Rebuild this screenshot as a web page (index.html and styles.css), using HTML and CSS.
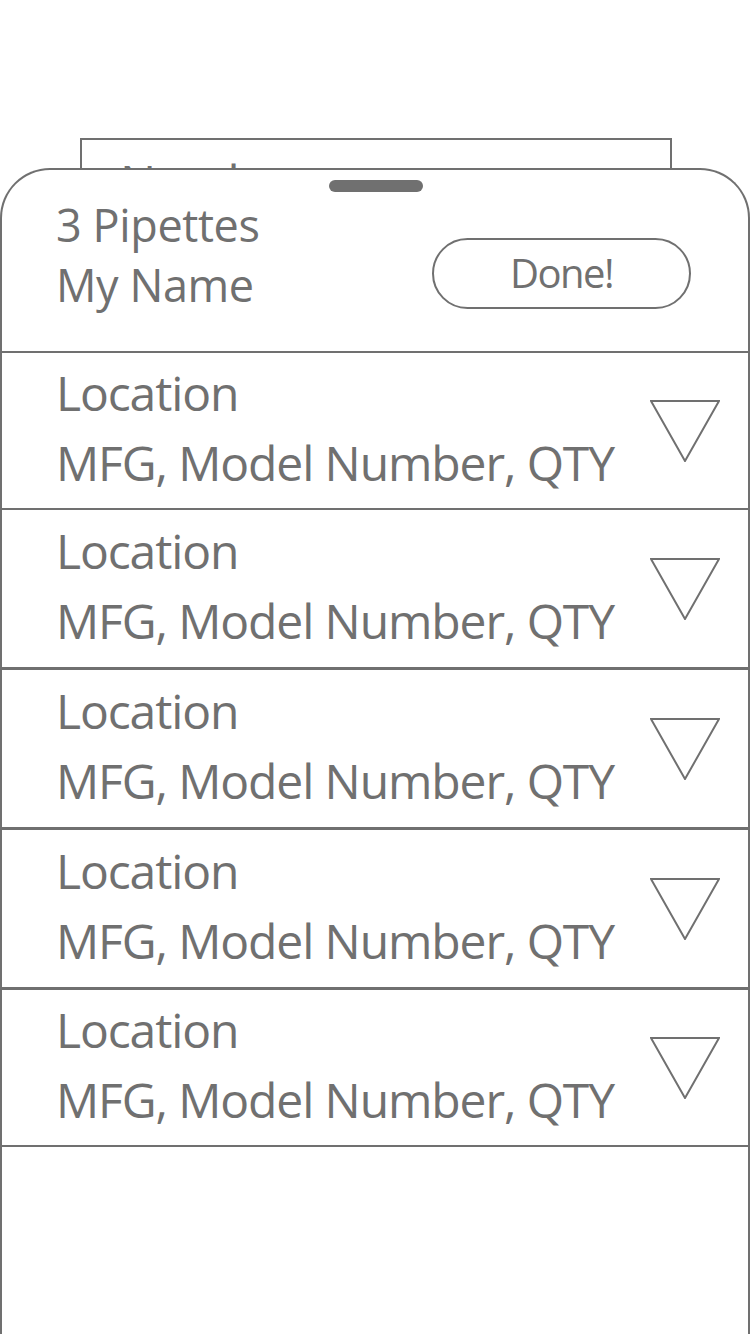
FILE: index.html
```html
<!DOCTYPE html>
<html>
<head>
<meta charset="utf-8">
<link rel="stylesheet" href="styles.css">
</head>
<body>
<div class="page">
  <div class="behind-field"><span class="behind-text">Number</span></div>
  <div class="sheet">
    <div class="handle"></div>
    <div class="sheet-header">
      <div class="header-text">
        <div class="title">3 Pipettes</div>
        <div class="title">My Name</div>
      </div>
      <button class="done-btn">Done!</button>
    </div>
    <div class="row">
      <div class="row-text"><div class="line">Location</div><div class="line">MFG, Model Number, QTY</div></div>
      <svg class="tri" width="70" height="62" viewBox="0 0 70 62"><polygon points="1,1 69,1 35,61" fill="none" stroke="#707070" stroke-width="2"/></svg>
    </div>
    <div class="row thick">
      <div class="row-text"><div class="line">Location</div><div class="line">MFG, Model Number, QTY</div></div>
      <svg class="tri" width="70" height="62" viewBox="0 0 70 62"><polygon points="1,1 69,1 35,61" fill="none" stroke="#707070" stroke-width="2"/></svg>
    </div>
    <div class="row thick">
      <div class="row-text"><div class="line">Location</div><div class="line">MFG, Model Number, QTY</div></div>
      <svg class="tri" width="70" height="62" viewBox="0 0 70 62"><polygon points="1,1 69,1 35,61" fill="none" stroke="#707070" stroke-width="2"/></svg>
    </div>
    <div class="row thick">
      <div class="row-text"><div class="line">Location</div><div class="line">MFG, Model Number, QTY</div></div>
      <svg class="tri" width="70" height="62" viewBox="0 0 70 62"><polygon points="1,1 69,1 35,61" fill="none" stroke="#707070" stroke-width="2"/></svg>
    </div>
    <div class="row">
      <div class="row-text"><div class="line">Location</div><div class="line">MFG, Model Number, QTY</div></div>
      <svg class="tri" width="70" height="62" viewBox="0 0 70 62"><polygon points="1,1 69,1 35,61" fill="none" stroke="#707070" stroke-width="2"/></svg>
    </div>
  </div>
</div>
</body>
</html>
```
FILE: styles.css
```css
* { box-sizing: border-box; }
html, body { margin: 0; padding: 0; background: #fff; }
body {
  font-family: "Open Sans", "Noto Sans", sans-serif;
  color: #707070;
  width: 750px;
  height: 1334px;
  overflow: hidden;
}
.page {
  display: flex;
  flex-direction: column;
  padding-top: 138px;
}
.behind-field {
  margin-left: 80px;
  width: 592px;
  height: 30px;
  flex: 0 0 30px;
  border: 2px solid #707070;
  border-bottom: none;
  overflow: hidden;
  padding-left: 38px;
  padding-top: 26px;
}
.behind-text {
  display: block;
  margin-top: 6px;
  font-size: 48px;
  line-height: 20px;
  letter-spacing: -0.8px;
}
.sheet {
  width: 750px;
  height: 1166px;
  border: 2px solid #707070;
  border-bottom: none;
  border-radius: 50px 50px 0 0;
  display: flex;
  flex-direction: column;
}
.handle {
  align-self: center;
  width: 94px;
  height: 12px;
  border-radius: 6px;
  background: #707070;
  margin-top: 10px;
  margin-left: 1px;
}
.sheet-header {
  display: flex;
  justify-content: space-between;
  align-items: flex-start;
  padding: 3px 57px 36px 54px;
  border-bottom: 2px solid #707070;
}
.title {
  font-size: 45px;
  line-height: 60px;
  letter-spacing: -0.4px;
}
.done-btn {
  margin-top: 43px;
  width: 259px;
  height: 71px;
  border: 2px solid #707070;
  border-radius: 36px;
  background: #fff;
  color: #707070;
  font-family: "Open Sans", "Noto Sans", sans-serif;
  font-size: 40px;
  letter-spacing: -1.5px;
  line-height: 1;
  padding: 0 0 2px 0;
}
.row {
  display: flex;
  align-items: center;
  justify-content: space-between;
  height: 157px;
  padding: 0 28px 8px 54px;
  border-bottom: 2px solid #707070;
}
.row.thick {
  height: 160px;
  border-bottom-width: 3px;
}
.row-text { padding-top: 2px; }
.line {
  font-size: 48px;
  line-height: 70px;
  letter-spacing: -1.1px;
  white-space: nowrap;
}
.tri { display: block; margin-top: 8px; }
```
